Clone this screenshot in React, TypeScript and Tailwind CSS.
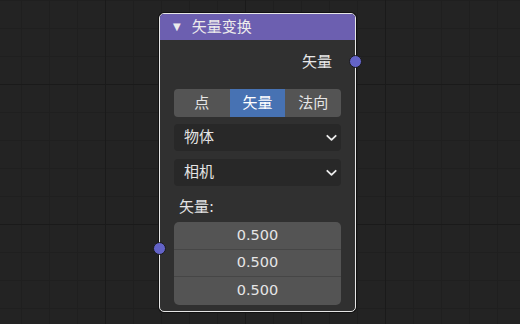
import React from "react";

const font = { fontFamily: '"DejaVu Sans", "Noto Sans CJK SC", sans-serif' };

function Chevron() {
  return (
    <svg width="11" height="8" viewBox="0 0 11 8" className="block">
      <path d="M1.3 1.8 L5.5 5.9 L9.7 1.8" fill="none" stroke="#ececec" strokeWidth="1.8" strokeLinecap="round" strokeLinejoin="round" />
    </svg>
  );
}

function Dropdown({ label }: { label: string }) {
  return (
    <div className="h-[27px] rounded-[4px] bg-[#282828] flex items-center justify-between pl-[10px] pr-[4px] text-[15px] text-[#e4e4e4]">
      <span>{label}</span>
      <Chevron />
    </div>
  );
}

export default function App() {
  return (
    <div
      className="relative w-[520px] h-[324px] overflow-hidden bg-[#232323] bg-[image:linear-gradient(to_right,#1a1a1a_1px,transparent_1px),linear-gradient(to_bottom,#1a1a1a_1px,transparent_1px),linear-gradient(to_right,#1f1f1f_1px,transparent_1px),linear-gradient(to_bottom,#1f1f1f_1px,transparent_1px)] bg-[size:140px_140px,140px_140px,28px_28px,28px_28px] bg-[position:105px_84px,105px_84px,21px_0px,21px_0px]"
      style={font}
    >
      <div className="absolute left-[159px] top-[13px] w-[197px] h-[299px] rounded-[5px] border border-[#e6e6e6] bg-[#303030] shadow-[0_0_0_1px_#111]">
        <div className="h-[26px] rounded-t-[4px] bg-[#6c5fb0] flex items-center pl-[13px] text-[#ececec]">
          <span className="text-[10px] mr-[11px] leading-none">▼</span>
          <span className="text-[15px] leading-none">矢量变换</span>
        </div>
        <div className="px-[14px] pt-[8px] flex flex-col">
          <div className="h-[28px] flex items-center justify-end pr-[9px] text-[15px] text-[#e8e8e8]">矢量</div>
          <div className="mt-[13px] h-[28px] flex rounded-[4px] overflow-hidden text-[15px] text-[#e6e6e6]">
            <div className="flex-1 bg-[#545454] flex items-center justify-center">点</div>
            <div className="flex-1 bg-[#4772b3] flex items-center justify-center text-white">矢量</div>
            <div className="flex-1 bg-[#545454] flex items-center justify-center">法向</div>
          </div>
          <div className="mt-[7px]">
            <Dropdown label="物体" />
          </div>
          <div className="mt-[8px]">
            <Dropdown label="相机" />
          </div>
          <div className="h-[36px] flex items-end pb-[4px] pl-[5px] text-[15px] text-[#e4e4e4]">矢量:</div>
          <div className="rounded-[5px] overflow-hidden flex flex-col text-[14.5px] text-[#e6e6e6]">
            <div className="h-[28px] bg-[#545454] flex items-center justify-center border-b border-[#464646]">0.500</div>
            <div className="h-[27px] bg-[#545454] flex items-center justify-center border-b border-[#464646]">0.500</div>
            <div className="h-[28px] bg-[#545454] flex items-center justify-center">0.500</div>
          </div>
        </div>
        <div className="absolute right-[-7px] top-[41px] w-[13px] h-[13px] rounded-full bg-[#6363c7] border border-[#1a1a1a]" />
        <div className="absolute left-[-7px] top-[228px] w-[13px] h-[13px] rounded-full bg-[#6363c7] border border-[#1a1a1a]" />
      </div>
    </div>
  );
}
